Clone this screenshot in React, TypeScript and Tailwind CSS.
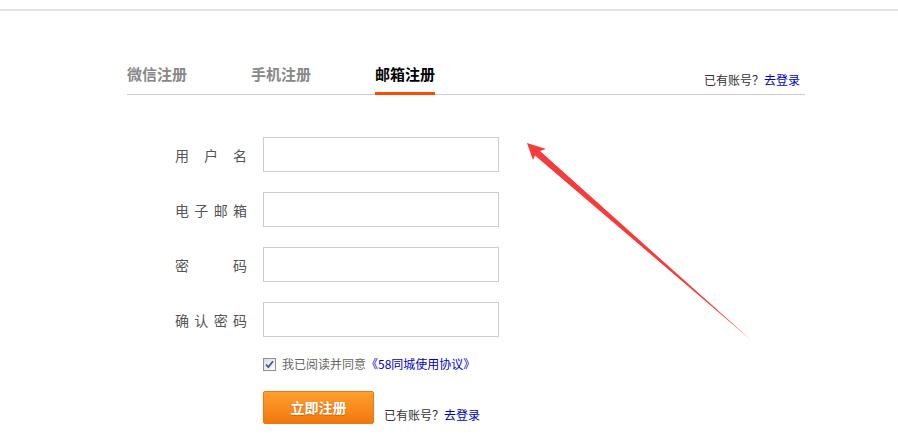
import React from "react";

const cjk = { fontFamily: '"Noto Sans CJK SC", "Liberation Sans", sans-serif' };

function Label({ chars }: { chars: string[] }) {
  return (
    <div className="flex w-[72px] justify-between text-[14px] leading-[20px] text-[#555]">
      {chars.map((c, i) => (
        <span key={i}>{c}</span>
      ))}
    </div>
  );
}

function Row({ chars }: { chars: string[] }) {
  return (
    <div className="flex items-center">
      <Label chars={chars} />
      <div className="ml-[16px] h-[35px] w-[236px] border border-[#cccccc] bg-white" />
    </div>
  );
}

export default function App() {
  return (
    <div className="relative h-[440px] w-[898px] overflow-hidden bg-white" style={cjk}>
      <div className="h-[11px] border-b-2 border-[#e2e2e2]" />
      <div className="ml-[127px] mt-[51px] w-[678px]">
        <div className="flex border-b border-[#cccccc]">
          <div className="mr-[64px] border-b-[2px] border-transparent pb-[6px] text-[15px] font-bold leading-[24px] text-[#888]">微信注册</div>
          <div className="mr-[64px] border-b-[2px] border-transparent pb-[6px] text-[15px] font-bold leading-[24px] text-[#888]">手机注册</div>
          <div className="-mb-px border-b-[3px] border-[#ff4a00] pb-[5px] text-[15px] font-bold leading-[24px] text-black">邮箱注册</div>
          <div className="ml-auto self-end pb-[6px] pr-[5px] text-[12px] leading-[16px] text-[#333]">
            已有账号？<span className="text-[#0000cc]">去登录</span>
          </div>
        </div>
        <div className="ml-[48px] mt-[42px] flex flex-col gap-[20px]">
          <Row chars={["用", "户", "名"]} />
          <Row chars={["电", "子", "邮", "箱"]} />
          <Row chars={["密", "码"]} />
          <Row chars={["确", "认", "密", "码"]} />
        </div>
        <div className="ml-[136px] mt-[19px] flex items-center text-[12px] leading-[16px]">
          <svg width="13" height="13" viewBox="0 0 13 13" className="shrink-0">
            <defs>
              <linearGradient id="cb" x1="0" y1="0" x2="1" y2="1">
                <stop offset="0" stopColor="#dcdcdc" />
                <stop offset="1" stopColor="#ffffff" />
              </linearGradient>
            </defs>
            <rect x="0.5" y="0.5" width="12" height="12" fill="url(#cb)" stroke="#8e8f8f" />
            <path d="M3 6.5 L5.3 9 L10 3.2" fill="none" stroke="#3d5aa4" strokeWidth="1.8" />
          </svg>
          <span className="ml-[6px] text-[#666]">我已阅读并同意</span>
          <span className="text-[#0000cc]">《58同城使用协议》</span>
        </div>
        <div className="ml-[136px] mt-[19px] flex items-end">
          <div className="flex h-[33px] w-[111px] items-center justify-center rounded-[2px] border border-[#ea7a10] bg-gradient-to-b from-[#fda02c] to-[#f3760c] text-[14px] font-bold text-white [text-shadow:0_1px_1px_rgba(160,70,0,0.5)]">
            立即注册
          </div>
          <div className="ml-[10px] pb-[1px] text-[12px] leading-[16px] text-[#333]">
            已有账号？<span className="text-[#0000cc]">去登录</span>
          </div>
        </div>
      </div>
      <svg className="pointer-events-none absolute left-0 top-0" width="898" height="440" viewBox="0 0 898 440">
        <polygon
          points="527,143 546,149 540,151 751,340 535,155.5 533,160"
          fill="#f73a3a"
        />
      </svg>
    </div>
  );
}
